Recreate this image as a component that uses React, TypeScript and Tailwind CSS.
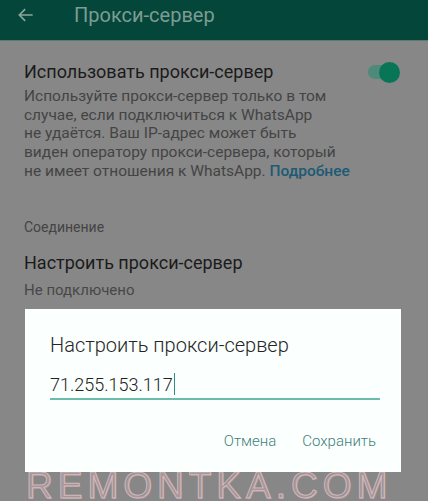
import React from "react";

const font = { fontFamily: "Roboto, 'Noto Sans', sans-serif" };

const descLines = [
  "Используйте прокси-сервер только в том",
  "случае, если подключиться к WhatsApp",
  "не удаётся. Ваш IP-адрес может быть",
  "виден оператору прокси-сервера, который",
];

function Header() {
  return (
    <div className="h-[41px] bg-[#04463a] flex items-start pt-[3px] border-b border-[#5d7a71]">
      <svg width="20" height="20" viewBox="0 0 24 24" className="ml-[16px] mt-[2px]" fill="none">
        <path d="M20 12H5M11 5l-7 7 7 7" stroke="#8aa59c" strokeWidth="2" />
      </svg>
      <div className="ml-[38px] text-[20px] leading-[24px] text-[#7d9c92]">Прокси-сервер</div>
    </div>
  );
}

function Toggle() {
  return (
    <div className="relative w-[34px] h-[22px] flex items-center">
      <div className="w-[30px] h-[14px] rounded-full bg-[#4d8a79] ml-[2px]" />
      <div className="absolute right-0 w-[21px] h-[21px] rounded-full bg-[#087556]" />
    </div>
  );
}

function Dialog() {
  return (
    <div className="absolute left-[25px] top-[309px] w-[376px] h-[163px] bg-[#fbfffe] z-10">
      <div className="pl-[25px] pt-[23px] text-[20px] leading-[26px] text-[#252525] font-light">
        Настроить прокси-сервер
      </div>
      <div className="ml-[25px] mr-[21px] mt-[12px] border-b-2 border-[#6cbcac] h-[30px] flex items-center">
        <span className="text-[18px] text-[#222] font-light">71.255.153.117</span>
        <span className="w-px h-[22px] bg-[#2e8e7e] ml-[1px]" />
      </div>
      <div className="flex justify-end gap-[26px] pr-[25px] mt-[30px] text-[15px] text-[#3f7f7a] font-light">
        <span>Отмена</span>
        <span>Сохранить</span>
      </div>
    </div>
  );
}

export default function App() {
  return (
    <div className="relative w-[428px] h-[501px] overflow-hidden bg-[#878787]" style={font}>
      <Header />
      <div className="pl-[24px] pr-[28px]">
        <div className="flex items-center justify-between mt-[19px]">
          <div className="text-[18px] leading-[24px] text-[#1b1b1b]">Использовать прокси-сервер</div>
          <Toggle />
        </div>
        <div className="mt-[3px] text-[15.5px] leading-[18.7px] text-[#444] whitespace-nowrap">
          {descLines.map(line => (
            <div key={line}>{line}</div>
          ))}
          <div>
            не имеет отношения к WhatsApp. <span className="text-[#1d5a74] font-medium">Подробнее</span>
          </div>
        </div>
        <div className="mt-[36px] text-[14px] leading-[20px] text-[#444]">Соединение</div>
        <div className="mt-[14px] text-[18px] leading-[24px] text-[#1b1b1b]">Настроить прокси-сервер</div>
        <div className="mt-[5px] text-[15px] leading-[20px] text-[#474747]">Не подключено</div>
      </div>
      <Dialog />
      <div
        className="absolute left-[26px] top-[472px] text-[37px] leading-[28px] tracking-[5px] text-transparent [-webkit-text-stroke:1px_#d8b9bd] [text-shadow:1px_1px_0_rgba(200,170,175,0.5)]"
        style={{ fontFamily: "'Liberation Sans', sans-serif" }}
      >
        REMONTKA.COM
      </div>
    </div>
  );
}
